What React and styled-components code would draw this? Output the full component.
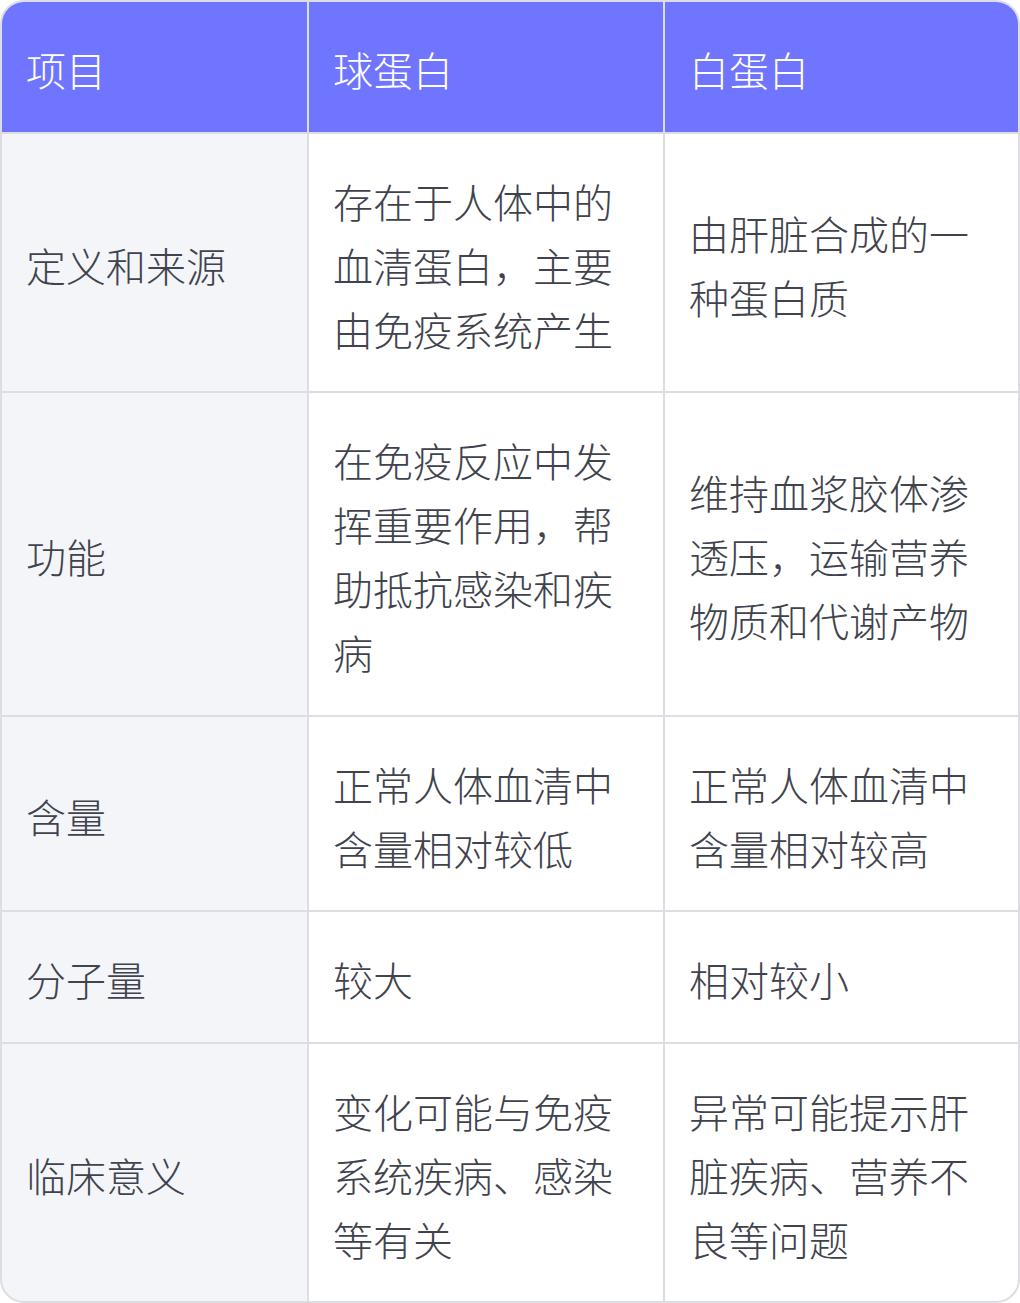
import React from "react";
import styled, { createGlobalStyle } from "styled-components";

const Global = createGlobalStyle`
  html, body { margin: 0; padding: 0; background: #ffffff; }
  body { font-family: "Noto Sans CJK SC", "Noto Sans", sans-serif; }
`;

const Frame = styled.div`
  width: 1020px;
  box-sizing: border-box;
  border: 2px solid #dddee4;
  border-radius: 24px;
  overflow: hidden;
`;

const Grid = styled.div`
  display: grid;
  grid-template-columns: 305px 354px 1fr;
  gap: 2px;
  background: #dddee4;
`;

const Cell = styled.div`
  box-sizing: border-box;
  padding: 35px 24px 30.5px;
  display: flex;
  align-items: center;
  font-size: 40px;
  font-weight: 300;
  line-height: 64px;
  color: ${(p) => (p.$head ? "#ffffff" : "#40434d")};
  background: ${(p) =>
    p.$head ? "#7075ff" : p.$first ? "#f4f5f9" : "#ffffff"};
  word-break: break-all;
`;

const head = ["项目", "球蛋白", "白蛋白"];
const rows = [
  ["定义和来源", "存在于人体中的血清蛋白，主要由免疫系统产生", "由肝脏合成的一种蛋白质"],
  ["功能", "在免疫反应中发挥重要作用，帮助抵抗感染和疾病", "维持血浆胶体渗透压，运输营养物质和代谢产物"],
  ["含量", "正常人体血清中含量相对较低", "正常人体血清中含量相对较高"],
  ["分子量", "较大", "相对较小"],
  ["临床意义", "变化可能与免疫系统疾病、感染等有关", "异常可能提示肝脏疾病、营养不良等问题"],
];

export default function App() {
  return (
    <>
      <Global />
      <Frame>
        <Grid>
          {head.map((h) => (
            <Cell key={h} $head>
              {h}
            </Cell>
          ))}
          {rows.map((r) =>
            r.map((c, i) => (
              <Cell key={r[0] + i} $first={i === 0}>
                {c}
              </Cell>
            ))
          )}
        </Grid>
      </Frame>
    </>
  );
}
